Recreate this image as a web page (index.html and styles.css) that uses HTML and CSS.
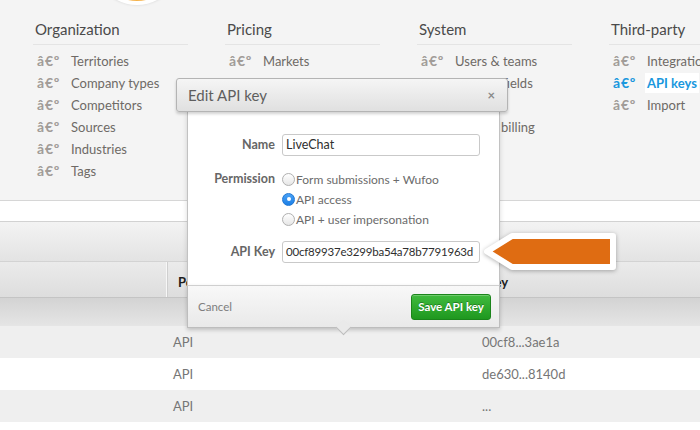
FILE: index.html
```html
<!DOCTYPE html>
<html>
<head>
<meta charset="utf-8">
<title>Edit API key</title>
<link rel="stylesheet" href="styles.css">
</head>
<body>
<div class="page">
  <div class="logo"></div>
  <nav class="menu">
    <section class="col">
      <h3>Organization</h3>
      <ul>
        <li><span class="bul">â€º</span>Territories</li>
        <li><span class="bul">â€º</span>Company types</li>
        <li><span class="bul">â€º</span>Competitors</li>
        <li><span class="bul">â€º</span>Sources</li>
        <li><span class="bul">â€º</span>Industries</li>
        <li><span class="bul">â€º</span>Tags</li>
      </ul>
    </section>
    <section class="col">
      <h3>Pricing</h3>
      <ul>
        <li><span class="bul">â€º</span>Markets</li>
      </ul>
    </section>
    <section class="col">
      <h3>System</h3>
      <ul>
        <li><span class="bul">â€º</span>Users &amp; teams</li>
        <li><span class="bul">â€º</span>Custom fields</li>
        <li class="blank"></li>
        <li><span class="bul">â€º</span>Plans &amp; billing</li>
      </ul>
    </section>
    <section class="col">
      <h3>Third-party</h3>
      <ul>
        <li><span class="bul">â€º</span>Integrations</li>
        <li class="active"><span class="bul">â€º</span><span class="hl">API keys</span></li>
        <li><span class="bul">â€º</span>Import</li>
      </ul>
    </section>
  </nav>
  <div class="band"></div>
  <div class="toolbar"></div>
  <div class="thead">
    <div class="c1"></div>
    <div class="c2">Permission</div>
    <div class="c3">Key</div>
  </div>
  <div class="shade"></div>
  <div class="row odd"><div class="c1"></div><div class="c2">API</div><div class="c3">00cf8...3ae1a</div></div>
  <div class="row"><div class="c1"></div><div class="c2">API</div><div class="c3">de630...8140d</div></div>
  <div class="row odd"><div class="c1"></div><div class="c2">API</div><div class="c3">...</div></div>

  <div class="popover">
    <div class="pop-head"><span class="title">Edit API key</span><span class="close">×</span></div>
    <div class="pop-body">
      <div class="frow">
        <div class="lbl">Name</div>
        <div class="field">LiveChat</div>
      </div>
      <div class="frow perm">
        <div class="lbl">Permission</div>
        <div class="radios">
          <div class="opt"><span class="radio"></span>Form submissions + Wufoo</div>
          <div class="opt"><span class="radio on"></span>API access</div>
          <div class="opt"><span class="radio"></span>API + user impersonation</div>
        </div>
      </div>
      <div class="frow keyrow">
        <div class="lbl">API Key</div>
        <div class="field key">00cf89937e3299ba54a78b7791963d</div>
      </div>
    </div>
    <div class="pop-foot">
      <span class="cancel">Cancel</span>
      <button class="save">Save API key</button>
    </div>
  </div>

  <svg class="callout" width="140" height="44" viewBox="0 0 140 44">
    <polygon points="6,20.5 31,5 132,5 132,36 31,36" fill="#df6c12" stroke="#ffffff" stroke-width="6" stroke-linejoin="round"/>
  </svg>
</div>
</body>
</html>
```

FILE: styles.css
```css
* { box-sizing: border-box; }

html, body {
  margin: 0;
  padding: 0;
  background: #ffffff;
}

body {
  font-family: "Lato", "Open Sans", sans-serif;
  font-size: 13px;
  color: #6b6b6b;
}

.page {
  position: relative;
  width: 700px;
  height: 430px;
  overflow: hidden;
  background: #ffffff;
}

.logo {
  position: absolute;
  left: 95px;
  top: -79px;
  width: 84px;
  height: 84px;
  border-radius: 50%;
  background: #f5b24a;
  border: 4px solid #ffffff;
  box-shadow: 0 0 3px rgba(0, 0, 0, 0.15);
}

/* menu */
.menu {
  height: 201px;
  background: #f4f4f4;
  border-bottom: 1px solid #d6d6d6;
  padding: 18px 0 0 33px;
  display: grid;
  grid-template-columns: repeat(4, 155px);
  column-gap: 37px;
}

.col h3 {
  margin: 0;
  padding: 0 0 4px 2px;
  font-size: 15px;
  line-height: 22px;
  font-weight: normal;
  color: #4a4a4a;
  border-bottom: 1px solid #e4e4e4;
}

.col ul {
  list-style: none;
  margin: 5px 0 0;
  padding: 0 0 0 4px;
}

.col li {
  line-height: 22px;
  height: 22px;
  white-space: nowrap;
  color: #6e6a66;
}

.bul {
  display: inline-block;
  width: 34px;
  font-size: 14px;
  font-weight: bold;
  letter-spacing: 0.8px;
  color: #a19c98;
}

.col li.active {
  color: #1a98de;
  font-weight: bold;
}

.col li.active .bul {
  color: #1a98de;
}

.hl {
  background: #ffffff;
  padding: 2px 2px;
  margin-left: -2px;
}

/* table-ish area */
.band {
  height: 21px;
  background: #ffffff;
  border-bottom: 1px solid #d2d2d2;
}

.toolbar {
  height: 40px;
  background: linear-gradient(#f3f3f3, #e3e3e3);
  border-bottom: 1px solid #d3d3d3;
}

.thead {
  display: flex;
  height: 36px;
  background: linear-gradient(#ebebeb, #dddddd);
  border-bottom: 1px solid #c4c4c4;
  color: #1e1e1e;
  font-weight: bold;
  align-items: stretch;
}

.thead .c1 {
  width: 167px;
  border-right: 1px solid #f7f7f7;
  box-shadow: 1px 0 0 #cfcfcf;
}

.thead .c2 {
  width: 309px;
  padding-left: 11px;
  line-height: 40px;
}

.thead .c3 {
  padding-left: 10px;
  line-height: 40px;
}

.shade {
  height: 28px;
  background: linear-gradient(#d3d3d3, #e5e5e5);
}

.row {
  display: flex;
  height: 32px;
  line-height: 32px;
  background: #ffffff;
  color: #767676;
}

.row.odd {
  background: #efefef;
}

.row .c1 { width: 167px; }
.row .c2 { width: 309px; padding-left: 6px; }
.row .c3 { padding-left: 6px; }

/* popover */
.popover {
  position: absolute;
  left: 176px;
  top: 78px;
  width: 332px;
  font-size: 12px;
}

.pop-head {
  height: 34px;
  display: flex;
  align-items: center;
  justify-content: space-between;
  padding: 0 12px 0 11px;
  background: linear-gradient(#f5f5f5, #e0e0e0);
  border: 1px solid #b4b4b4;
  border-radius: 3px;
  box-shadow: 0 2px 3px rgba(0, 0, 0, 0.18);
  position: relative;
  z-index: 2;
}

.title {
  font-size: 15px;
  color: #5e5e5e;
}

.close {
  font-size: 13px;
  font-weight: bold;
  color: #8a8a8a;
}

.pop-body {
  margin-left: 11px;
  width: 313px;
  background: #ffffff;
  border-left: 1px solid #c2c2c2;
  border-right: 1px solid #c2c2c2;
  padding: 22px 0 22px 0;
  box-shadow: 0 0 5px rgba(0, 0, 0, 0.15);
}

.frow {
  display: flex;
  align-items: flex-start;
}

.frow.perm { margin-top: 13px; }
.frow.keyrow { margin-top: 12px; }

.lbl {
  width: 87px;
  text-align: right;
  font-weight: bold;
  font-size: 12.5px;
  color: #666666;
  line-height: 22px;
  margin-right: 7px;
}

.perm .lbl { line-height: 20px; }

.field {
  width: 198px;
  height: 22px;
  border: 1px solid #c9c9c9;
  border-radius: 3px;
  padding: 0 0 0 3px;
  line-height: 20px;
  font-size: 12.5px;
  color: #2e2e2e;
  background: #ffffff;
  white-space: nowrap;
  overflow: hidden;
}

.field.key {
  font-size: 11.5px;
  letter-spacing: -0.2px;
}

.radios { display: flex; flex-direction: column; }

.opt {
  display: flex;
  align-items: center;
  height: 20px;
  font-size: 12px;
  color: #6b6b6b;
}

.radio {
  width: 13px;
  height: 13px;
  border-radius: 50%;
  border: 1px solid #b0b0b0;
  background: linear-gradient(#ffffff, #e6e6e6);
  margin-right: 1px;
  position: relative;
  flex: none;
}

.radio.on {
  border-color: #1f76d2;
  background: linear-gradient(#4aa2f6, #1c7fe6);
}

.radio.on::after {
  content: "";
  position: absolute;
  left: 3.5px;
  top: 3.5px;
  width: 4px;
  height: 4px;
  border-radius: 50%;
  background: #ffffff;
}

.pop-foot {
  position: relative;
  margin-left: 11px;
  width: 313px;
  height: 43px;
  display: flex;
  align-items: center;
  justify-content: space-between;
  padding: 0 8px 0 10px;
  background: linear-gradient(#f8f8f8, #e9e9e9);
  border: 1px solid #bdbdbd;
  border-top-color: #cfcfcf;
  box-shadow: 0 2px 4px rgba(0, 0, 0, 0.2);
}

.pop-foot::after {
  content: "";
  position: absolute;
  left: 150px;
  bottom: -6px;
  width: 10px;
  height: 10px;
  background: #eaeaea;
  border-right: 1px solid #bdbdbd;
  border-bottom: 1px solid #bdbdbd;
  transform: rotate(45deg);
}

.cancel {
  font-size: 11.5px;
  color: #7e7e7e;
}

.save {
  width: 80px;
  height: 26px;
  padding: 0;
  border: 1px solid #1b841b;
  border-radius: 3px;
  background: linear-gradient(#40ba3e, #1f981f);
  color: #ffffff;
  font-family: "Lato", "Open Sans", sans-serif;
  font-size: 11.5px;
  font-weight: bold;
  text-shadow: 0 -1px 0 rgba(0, 0, 0, 0.3);
  box-shadow: inset 0 1px 0 rgba(255, 255, 255, 0.25);
}

.callout {
  position: absolute;
  left: 481px;
  top: 231px;
  filter: drop-shadow(0 1px 2px rgba(0, 0, 0, 0.3));
}
```
